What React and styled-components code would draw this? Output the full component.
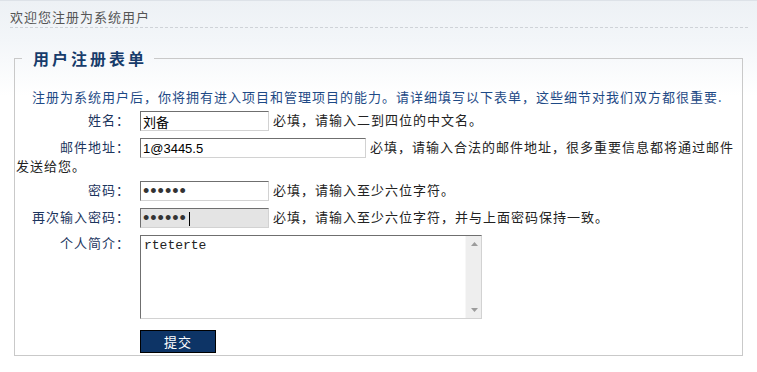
import React from "react";
import styled, { createGlobalStyle } from "styled-components";

const Global = createGlobalStyle`
  html, body {
    margin: 0;
    padding: 0;
    background: #fff;
  }
  body {
    font-family: "Noto Sans CJK SC", "Liberation Sans", sans-serif;
    font-size: 13px;
    letter-spacing: 1px;
    color: #222;
  }
`;

const Page = styled.div`
  border-top: 1px solid #dde2e8;
  min-height: 371px;
  background: linear-gradient(#edf1f5 0px, #f3f6f9 40px, #ffffff 95px) no-repeat;
`;

const Header = styled.div`
  margin: 0 9px 0 10px;
  padding-top: 6px;
  height: 20px;
  line-height: 20px;
  border-bottom: 1px dashed #cfd3d8;
  color: #555;
`;

const Body = styled.div`
  padding: 20px 14px 0;
`;

const Fieldset = styled.fieldset`
  margin: 0;
  padding: 0 1px 2px 1px;
  border: 1px solid #c9c9c9;
  min-width: 0;
`;

const Legend = styled.legend`
  margin-left: 6px;
  padding: 0 7px 0 11px;
  font-size: 16px;
  line-height: 20px;
  font-weight: bold;
  letter-spacing: 3px;
  color: #173c6b;
`;

const Intro = styled.p`
  margin: 20px 0 3px;
  padding-left: 16px;
  line-height: 17px;
  color: #1e4a86;
`;

const Row = styled.div`
  padding: 3px 0 4px;
  line-height: 16px;
`;

const Label = styled.span`
  display: inline-block;
  width: 114px;
  margin-right: 10px;
  text-align: right;
  color: #1c355e;
  vertical-align: ${(p) => (p.$top ? "top" : "baseline")};
`;

const TextInput = styled.input`
  box-sizing: border-box;
  width: ${(p) => p.$w}px;
  height: 20px;
  margin: 0 4px 0 0;
  padding: 0 2px;
  border: 1px solid;
  border-color: #6f6f6f #d2d2d2 #d2d2d2 #6f6f6f;
  border-radius: 0;
  font: ${(p) => (p.type === "password" ? "18px" : "13px")} "Liberation Sans", "Noto Sans CJK SC", sans-serif;
  letter-spacing: ${(p) => (p.type === "password" ? "1px" : "0")};
  color: ${(p) => (p.type === "password" ? "#333" : "#000")};
  background: ${(p) =>
    p.$active
      ? "linear-gradient(#000, #000) no-repeat 48px 3px / 1px 14px, #e4e4e4"
      : "#fff"};
  vertical-align: middle;
  outline: none;
`;

const Hint = styled.span`
  color: #222;
`;

const TextBox = styled.span`
  box-sizing: border-box;
  display: inline-flex;
  width: 342px;
  height: 84px;
  border: 1px solid;
  border-color: #6f6f6f #d2d2d2 #d2d2d2 #6f6f6f;
  background: #fff;
  vertical-align: top;
`;

const TextArea = styled.textarea`
  flex: 1;
  min-width: 0;
  margin: 0;
  padding: 2px 3px;
  border: none;
  font: 13px "Liberation Mono", monospace;
  letter-spacing: 0;
  color: #222;
  background: transparent;
  resize: none;
  overflow: hidden;
  outline: none;
`;

const ScrollBar = styled.span`
  display: flex;
  flex-direction: column;
  justify-content: space-between;
  align-items: center;
  width: 16px;
  padding: 6px 0 6px 1px;
  box-sizing: border-box;
  background: #eeeeee;
  border-left: 1px solid #f7f7f7;
`;

const Arrow = ({ down }) => (
  <svg width="7" height="4" viewBox="0 0 7 4">
    <path d={down ? "M0 0H7L3.5 4Z" : "M0 4H7L3.5 0Z"} fill="#9c9c9c" />
  </svg>
);

const ButtonRow = styled.div`
  padding: 7px 0 0 124px;
  line-height: 0;
`;

const Submit = styled.button`
  box-sizing: border-box;
  width: 76px;
  height: 23px;
  padding: 0;
  border: 1px solid #000;
  border-radius: 0;
  background: #0d3466;
  color: #fff;
  font: 13px "Noto Sans CJK SC", sans-serif;
  letter-spacing: 1px;
  line-height: 20px;
  cursor: pointer;
`;

export default function App() {
  return (
    <>
      <Global />
      <Page>
        <Header>欢迎您注册为系统用户</Header>
        <Body>
          <Fieldset>
            <Legend>用户注册表单</Legend>
            <Intro>
              注册为系统用户后，你将拥有进入项目和管理项目的能力。请详细填写以下表单，这些细节对我们双方都很重要.
            </Intro>
            <Row>
              <Label>姓名：</Label>
              <TextInput $w={129} defaultValue="刘备" />
              <Hint>必填，请输入二到四位的中文名。</Hint>
            </Row>
            <Row>
              <Label>邮件地址：</Label>
              <TextInput $w={226} defaultValue="1@3445.5" />
              <Hint>必填，请输入合法的邮件地址，很多重要信息都将通过邮件发送给您。</Hint>
            </Row>
            <Row>
              <Label>密码：</Label>
              <TextInput $w={129} type="password" defaultValue="123456" />
              <Hint>必填，请输入至少六位字符。</Hint>
            </Row>
            <Row>
              <Label>再次输入密码：</Label>
              <TextInput $w={129} $active type="password" defaultValue="123456" />
              <Hint>必填，请输入至少六位字符，并与上面密码保持一致。</Hint>
            </Row>
            <Row>
              <Label $top>个人简介：</Label>
              <TextBox>
                <TextArea defaultValue="rteterte" />
                <ScrollBar>
                  <Arrow />
                  <Arrow down />
                </ScrollBar>
              </TextBox>
            </Row>
            <ButtonRow>
              <Submit type="submit">提交</Submit>
            </ButtonRow>
          </Fieldset>
        </Body>
      </Page>
    </>
  );
}
